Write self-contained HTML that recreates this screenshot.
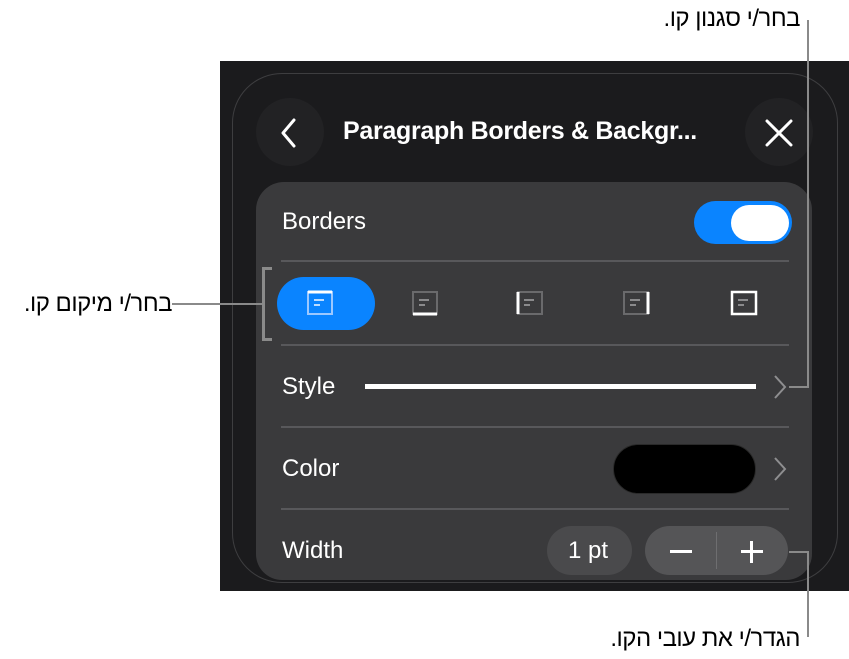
<!DOCTYPE html>
<html><head><meta charset="utf-8"><style>
*{margin:0;padding:0;box-sizing:border-box}
body{width:849px;height:659px;background:#fff;position:relative;overflow:hidden;font-family:"Liberation Sans","Noto Sans CJK JP",sans-serif}
.abs{position:absolute}
.panel{left:220px;top:61px;width:629px;height:530px;background:#1b1b1d;overflow:hidden}
.outer{left:12px;top:12px;width:606px;height:510px;border:1px solid #3e3e40;border-radius:50px}
.card{left:256px;top:182px;width:556px;height:398px;background:#3a3a3c;border-radius:28px 28px 26px 26px}
.t{color:#fff;font-size:24px}
.sep{height:2px;background:#58585b;left:281px;width:508px}
.heb{font-size:24px;color:#000;direction:rtl;letter-spacing:-0.5px}
.line{background:#8a8a8a}
</style></head><body>
<div class="abs panel"><div class="abs outer"></div></div>
<div class="abs" style="left:256px;top:98px;width:68px;height:68px;border-radius:50%;background:#222224"></div>
<div class="abs" style="left:745px;top:98px;width:68px;height:68px;border-radius:50%;background:#222224"></div>
<svg class="abs" style="left:278px;top:118px" width="20" height="30"><path d="M16 2 L5 15 L16 28" stroke="#fff" stroke-width="3" fill="none" stroke-linecap="round" stroke-linejoin="round"/></svg>
<svg class="abs" style="left:764px;top:118px" width="30" height="30"><path d="M3 3L27 27M27 3L3 27" stroke="#fff" stroke-width="3" stroke-linecap="round"/></svg>
<div class="abs t" style="left:343px;top:117px;font-weight:bold;font-size:25px;letter-spacing:-0.3px">Paragraph Borders &amp; Backgr...</div>
<div class="abs card"></div>
<div class="abs t" style="left:282px;top:208px">Borders</div>
<div class="abs" style="left:694px;top:201px;width:98px;height:43px;border-radius:22px;background:#0a84ff"></div>
<div class="abs" style="left:731px;top:205px;width:58px;height:36px;border-radius:18px;background:#fff"></div>
<div class="abs sep" style="top:260px"></div>
<div class="abs" style="left:262px;top:267px;width:10px;height:74px;border:3px solid #8a8a8a;border-right:none"></div>
<div class="abs line" style="left:172px;top:303px;width:90px;height:2px"></div>
<div class="abs" style="left:277px;top:277px;width:98px;height:53px;border-radius:27px;background:#0a84ff"></div>
<svg class="abs" style="left:300px;top:290px" width="480" height="30">
<g fill="none" stroke-width="2">
<rect x="8" y="2" width="24" height="22" stroke="#9cc8ff"/><path d="M8 2H32" stroke="#fff" stroke-width="3"/><path d="M14 10H24M14 15H20" stroke="#bcdcff"/>
<rect x="113" y="2" width="24" height="22" stroke="#6a6a6c"/><path d="M113 24H137" stroke="#fff" stroke-width="3"/><path d="M119 10H129M119 15H125" stroke="#8a8a8c"/>
<rect x="218" y="2" width="24" height="22" stroke="#6a6a6c"/><path d="M218 2V24" stroke="#fff" stroke-width="3"/><path d="M224 10H234M224 15H230" stroke="#8a8a8c"/>
<rect x="324" y="2" width="24" height="22" stroke="#6a6a6c"/><path d="M348 2V24" stroke="#fff" stroke-width="3"/><path d="M330 10H340M330 15H336" stroke="#8a8a8c"/>
<rect x="432" y="2" width="24" height="22" stroke="#fff" stroke-width="2.5"/><path d="M438 10H448M438 15H444" stroke="#8a8a8c"/>
</g></svg>
<div class="abs sep" style="top:344px"></div>
<div class="abs t" style="left:282px;top:373px">Style</div>
<div class="abs" style="left:365px;top:384px;width:391px;height:5px;background:#fff"></div>
<svg class="abs" style="left:772px;top:374px" width="16" height="26"><path d="M3 2L13 13L3 24" stroke="#8e8e90" stroke-width="2" fill="none"/></svg>
<div class="abs sep" style="top:426px"></div>
<div class="abs t" style="left:282px;top:455px">Color</div>
<div class="abs" style="left:613px;top:444px;width:143px;height:50px;border-radius:25px;background:#000;border:1px solid #2a2a2a"></div>
<svg class="abs" style="left:772px;top:456px" width="16" height="26"><path d="M3 2L13 13L3 24" stroke="#8e8e90" stroke-width="2" fill="none"/></svg>
<div class="abs sep" style="top:508px"></div>
<div class="abs t" style="left:282px;top:537px">Width</div>
<div class="abs" style="left:547px;top:526px;width:85px;height:49px;border-radius:25px;background:#4a4a4c"></div>
<div class="abs t" style="left:568px;top:537px">1 pt</div>
<div class="abs" style="left:645px;top:526px;width:143px;height:49px;border-radius:25px;background:#555557"></div>
<div class="abs" style="left:716px;top:532px;width:1px;height:37px;background:#6e6e70"></div>
<div class="abs" style="left:670px;top:550px;width:22px;height:3px;background:#fff"></div>
<div class="abs" style="left:741px;top:550px;width:22px;height:3px;background:#fff"></div>
<div class="abs" style="left:750px;top:541px;width:3px;height:22px;background:#fff"></div>
<div class="abs line" style="left:807px;top:20px;width:2px;height:368px"></div>
<div class="abs line" style="left:789px;top:386px;width:20px;height:2px"></div>
<div class="abs line" style="left:789px;top:551px;width:20px;height:2px"></div>
<div class="abs line" style="left:807px;top:551px;width:2px;height:86px"></div>
<div class="abs heb" style="left:500px;width:300px;top:5px;text-align:right">בחר/י סגנון קו.</div>
<div class="abs heb" style="left:0px;width:172px;top:290px;text-align:right">בחר/י מיקום קו.</div>
<div class="abs heb" style="left:500px;width:300px;top:625px;text-align:right">הגדר/י את עובי הקו.</div>
</body></html>
